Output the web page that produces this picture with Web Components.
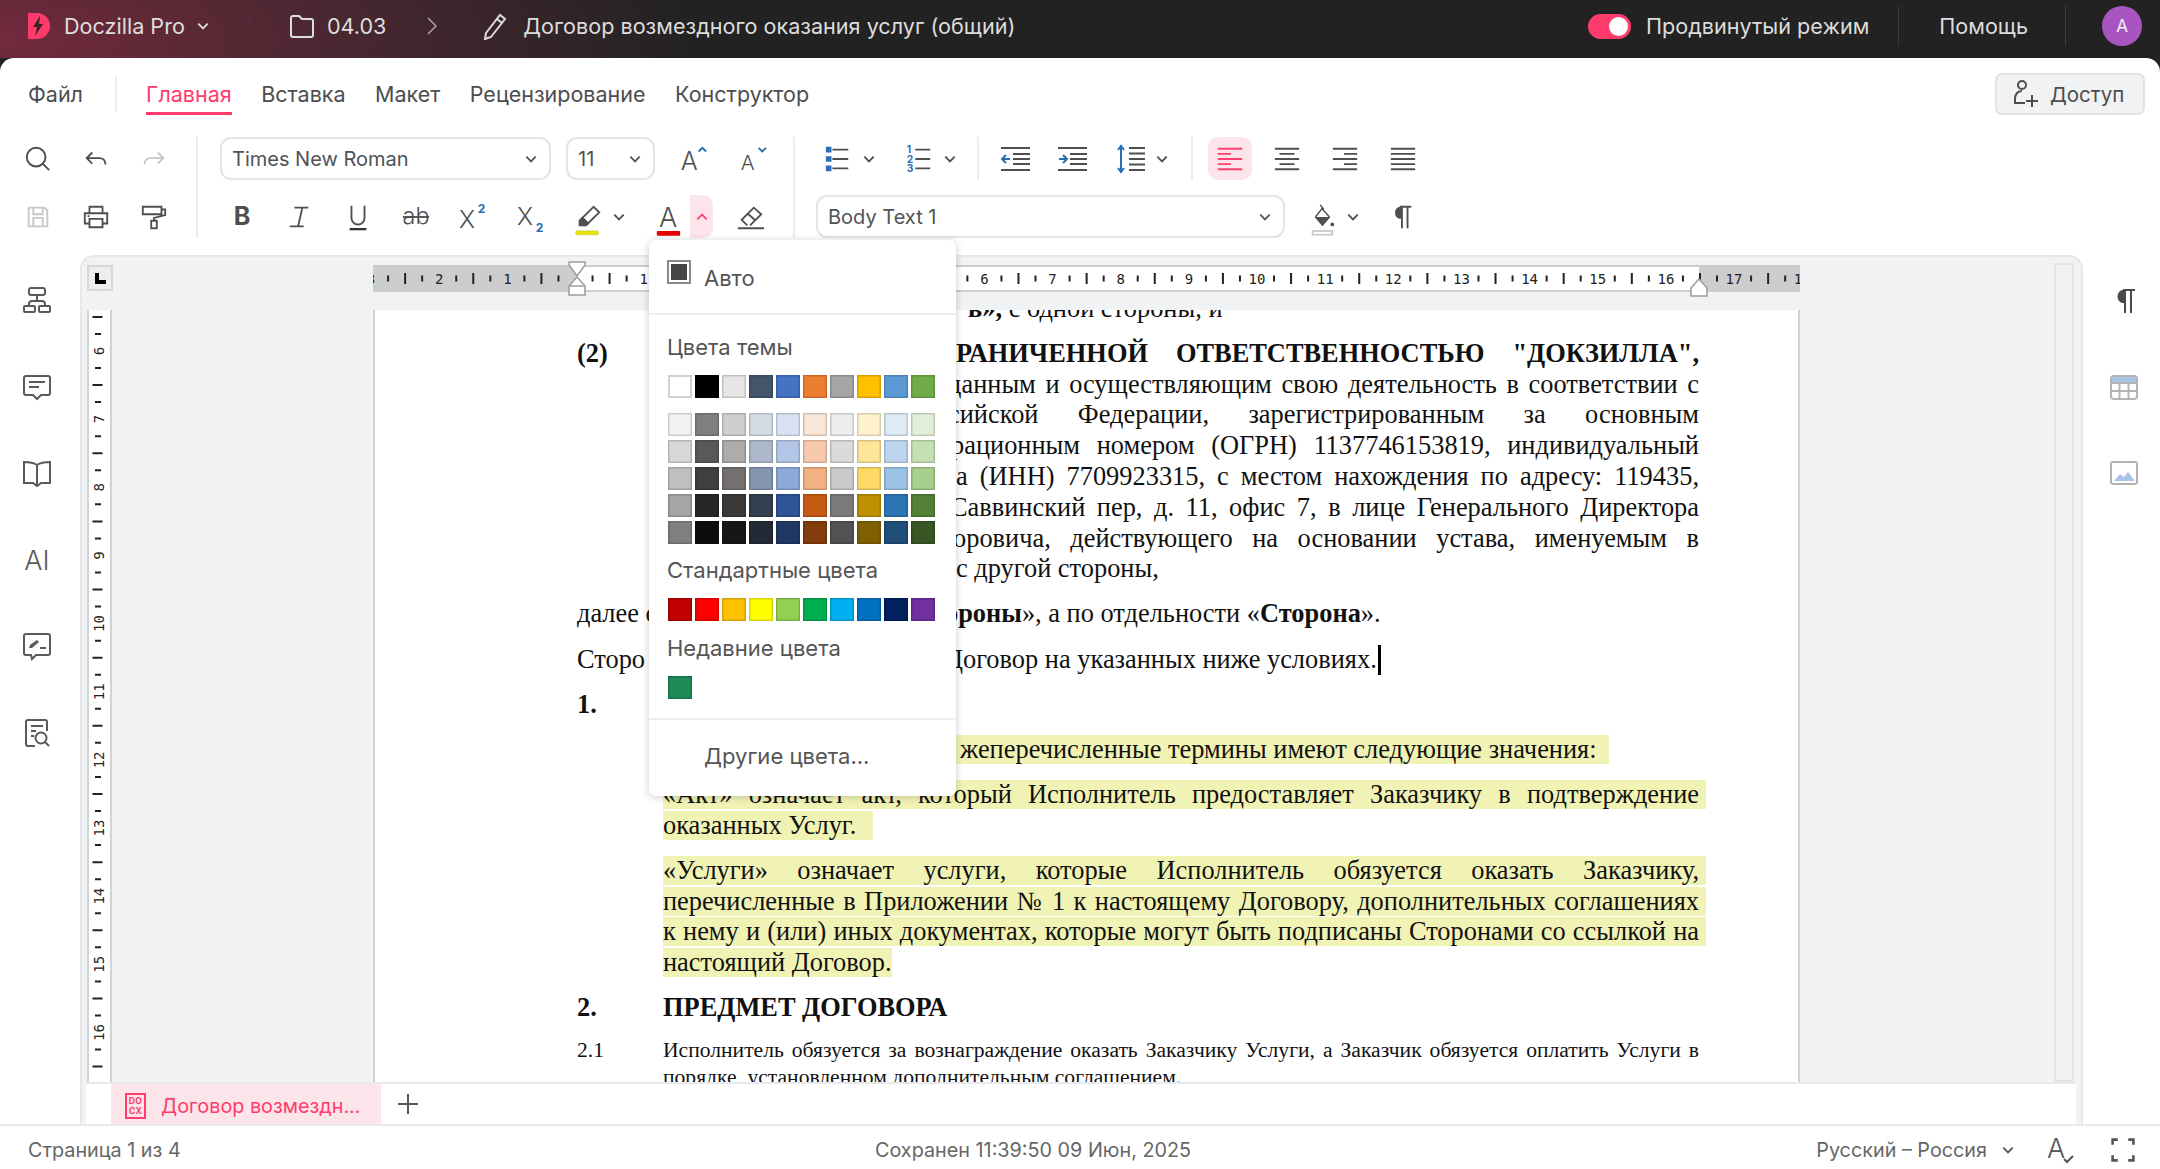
<!DOCTYPE html>
<html lang="ru">
<head>
<meta charset="utf-8">
<title>Doczilla Pro</title>
<style>
  html, body { margin: 0; height: 100%; overflow: hidden; }
  body {
    width: 2160px; height: 1169px;
    display: flex; flex-direction: column;
    background: #222;
    font-family: Inter, "Noto Sans", sans-serif;
    color: #4d4d4d;
  }
</style>
</head>
<body>
<app-topbar></app-topbar>
<main-panel>
  <ribbon-tabs></ribbon-tabs>
  <ribbon-tools></ribbon-tools>
  <work-space>
    <doc-line end style="--from:305px;margin-top:-17px"><b>в»,</b> с одной стороны, и</doc-line>

    <doc-line lead="(2)" style="--from:293px;margin-top:14px"><b>РАНИЧЕННОЙ ОТВЕТСТВЕННОСТЬЮ "ДОКЗИЛЛА",</b></doc-line>
    <doc-line style="--from:285px">данным и осуществляющим свою деятельность в соответствии с</doc-line>
    <doc-line style="--from:285px">сийской Федерации, зарегистрированным за основным</doc-line>
    <doc-line style="--from:288px">рационным номером (ОГРН) 1137746153819, индивидуальный</doc-line>
    <doc-line style="--from:293px">а (ИНН) 7709923315, с местом нахождения по адресу: 119435,</doc-line>
    <doc-line style="--from:287px">Саввинский пер, д. 11, офис 7, в лице Генерального Директора</doc-line>
    <doc-line style="--from:290px">оровича, действующего на основании устава, именуемым в</doc-line>
    <doc-line end style="--from:293px">с другой стороны,</doc-line>

    <doc-line end plain="далее с" class="gap" style="--from:282px"><b>ороны</b>», а по отдельности «<b>Сторона</b>».</doc-line>
    <doc-line end plain="Сторо" class="gap" caret style="--from:282px">Договор на указанных ниже условиях.</doc-line>
    <doc-line end lead="1." class="gap"></doc-line>

    <doc-line end mark class="gap" style="--from:297px;--mark-end:1609px">жеперечисленные термины имеют следующие значения:</doc-line>
    <doc-line mark class="gap">«Акт» означает акт, который Исполнитель предоставляет Заказчику в подтверждение</doc-line>
    <doc-line end mark style="--mark-end:873px">оказанных Услуг.</doc-line>
    <doc-line mark class="gap">«Услуги» означает услуги, которые Исполнитель обязуется оказать Заказчику,</doc-line>
    <doc-line mark>перечисленные в Приложении № 1 к настоящему Договору, дополнительных соглашениях</doc-line>
    <doc-line mark>к нему и (или) иных документах, которые могут быть подписаны Сторонами со ссылкой на</doc-line>
    <doc-line end mark style="--mark-end:892px">настоящий Договор.</doc-line>

    <doc-line end lead="2." class="gap"><b class="h">ПРЕДМЕТ ДОГОВОРА</b></doc-line>
    <doc-line small plain="2.1" class="gap">Исполнитель обязуется за вознаграждение оказать Заказчику Услуги, а Заказчик обязуется оплатить Услуги в</doc-line>
    <doc-line small end>порядке, установленном дополнительным соглашением.</doc-line>
  </work-space>
  <status-bar></status-bar>
  <color-menu></color-menu>
</main-panel>

<script>
const BLUE = "#2a6db5";
const THEXT = 'font-family="Inter,sans-serif" fill="currentColor" stroke="none"';
const ICONS = {
  search: `<circle cx="13" cy="13" r="10"/><path d="M20.5 20.5 27 27"/>`,
  undo: `<path d="M11 8 5 14l6 6M5 14h14a6 6 0 0 1 6 6v1"/>`,
  redo: `<path d="m19 8 6 6-6 6M25 14H11a6 6 0 0 0-6 6v1"/>`,
  save: `<path d="M5 5h17l3 3v17H5zM10 5v7h10V5M10 25v-9h10v9"/>`,
  print: `<path d="M8 11V4h14v7M8 22H3V11h24v11h-5M8 17h14v9H8zM6 14h2"/>`,
  paint: `<path d="M3 4h20v8H3zM23 7h4v6l-12 3v3M12 19h6v8h-6z"/>`,
  bold: `<text x="15" y="24" text-anchor="middle" font-size="27" font-weight="700" ${THEXT}>B</text>`,
  italic: `<path d="M9 5h15M17.5 5 13 25M4 25h15"/>`,
  under: `<path d="M8 3v13a7 7 0 0 0 14 0V3"/><path d="M6 28h18" stroke-width="2.5" stroke="#333"/>`,
  strike: `<text x="15" y="23" text-anchor="middle" font-size="25" font-weight="300" ${THEXT}>ab</text><path d="M1 15h28"/>`,
  sup: `<text x="1" y="27" font-size="26" font-weight="300" ${THEXT}>X<tspan dx="3" dy="-16" font-size="13" font-weight="700" fill="${BLUE}">2</tspan></text>`,
  sub: `<text x="0" y="24" font-size="26" font-weight="300" ${THEXT}>X<tspan dx="3" dy="7" font-size="13" font-weight="700" fill="${BLUE}">2</tspan></text>`,
  growa: `<text x="2" y="27" font-size="27" font-weight="300" ${THEXT}>A</text><path d="m21 7 4-4 4 4" stroke="${BLUE}"/>`,
  shrinka: `<text x="3" y="27" font-size="22" font-weight="300" ${THEXT}>A</text><path d="m22 3 4 4 4-4" stroke="${BLUE}"/>`,
  marker: `<path d="m9 16 12-12 6 6-12 12z"/><path d="m9 16 6 6-2 2H6v-5z" fill="currentColor"/><rect x="2" y="30" width="24" height="4" rx="1" fill="#e6e600" stroke="#d8d13a" stroke-width="1"/>`,
  fontc: `<text x="15" y="26" text-anchor="middle" font-size="29" font-weight="300" ${THEXT}>A</text><rect x="3" y="30" width="25" height="5" rx="1" fill="#e60000" stroke="none"/>`,
  eraser: `<path d="m11 24-6-6L18 5l8 7-12 12M11 11l8 7M1 27h28"/>`,
  bullets: `<path d="M9 5h17M9 15h17M9 25h17"/><path d="M2 2h6v6H2zM2 12h6v6H2zM2 22h6v6H2z" fill="${BLUE}" stroke="none"/>`,
  numbers: `<path d="M11 5h16M11 15h16M11 25h16"/><g font-family="Inter,sans-serif" font-size="11" font-weight="700" fill="${BLUE}" stroke="none"><text x="2" y="9">1</text><text x="2" y="19">2</text><text x="2" y="29">3</text></g>`,
  outdent: `<path d="M1 4h29M13 10h17M13 15h17M13 20h17M1 26h29"/><path d="M10 15H2M6 11l-4 4 4 4" stroke="${BLUE}"/>`,
  indent: `<path d="M1 4h29M13 10h17M13 15h17M13 20h17M1 26h29"/><path d="M2 15h8M6 11l4 4-4 4" stroke="${BLUE}"/>`,
  spacing: `<path d="M13 4h16M13 9.500h16M13 15h16M13 20.500h16M13 26h16"/><path d="M5 3v24M2 6l3-4 3 4M2 24l3 4 3-4" stroke="${BLUE}"/>`,
  left: `<path d="M2 4h26M2 9.500h14M2 15h26M2 20.500h14M2 26h26"/>`,
  center: `<path d="M2 4h26M7 9.500h16M2 15h26M7 20.500h16M2 26h26"/>`,
  right: `<path d="M2 4h26M14 9.500h14M2 15h26M14 20.500h14M2 26h26"/>`,
  justify: `<path d="M2 4h26M2 9.500h26M2 15h26M2 20.500h26M2 26h26"/>`,
  fill: `<path d="m8 15 7-9 8 9M13 2l4 5" stroke-width="1.500"/><path d="M7 15h17l-8.500 10z" fill="currentColor" stroke="none"/><circle cx="26" cy="23" r="2" fill="currentColor" stroke="none"/><rect x="5" y="30" width="21" height="4" fill="#fff" stroke="#ccc"/>`,
  pilcrow: `<path d="M14 4h12M16 4v23M22 4v23"/><path d="M15 4h-2a7 7 0 0 0 0 13h2z" fill="currentColor" stroke="none"/>`,
  chevron: `<path d="M10 12.500 15 17.500 20 12.500"/>`,
  chevup: `<path d="M10 17.500 15 12.500 20 17.500"/>`,
  tree: `<path d="M9 3h12a2 2 0 0 1 2 2v3a2 2 0 0 1-2 2H9a2 2 0 0 1-2-2V5a2 2 0 0 1 2-2zM15 10v6M7 21v-2a3 3 0 0 1 3-3h10a3 3 0 0 1 3 3v2M3 21h9a1 1 0 0 1 1 1v4a1 1 0 0 1-1 1H3a1 1 0 0 1-1-1v-4a1 1 0 0 1 1-1zM18 21h9a1 1 0 0 1 1 1v4a1 1 0 0 1-1 1h-9a1 1 0 0 1-1-1v-4a1 1 0 0 1 1-1z"/>`,
  comment: `<path d="M4 4h22a2 2 0 0 1 2 2v15a2 2 0 0 1-2 2H19l-4 4-4-4H4a2 2 0 0 1-2-2V6a2 2 0 0 1 2-2zM7 10h16M7 15h10"/>`,
  book: `<path d="M15 7C12 5 8 4 2 4v21h9l4 3 4-3h9V4c-6 0-10 1-13 3v21"/>`,
  ai: `<text x="15" y="25" text-anchor="middle" font-size="27" font-weight="300" ${THEXT}>AI</text>`,
  feedback: `<path d="M4 3h22a2 2 0 0 1 2 2v17a2 2 0 0 1-2 2H14l-4 4-1-4H4a2 2 0 0 1-2-2V5a2 2 0 0 1 2-2zM18 17h6"/><path d="m7 17 1-3 7-5 2 2-7 6z" fill="currentColor" stroke="none"/>`,
  finddoc: `<path d="M13 28H6a2 2 0 0 1-2-2V4a2 2 0 0 1 2-2h17a2 2 0 0 1 2 2v9M9 8h12M9 13h5M9 18h3"/><circle cx="19" cy="20" r="5.500"/><path d="m23 24 4 4"/>`,
  table: `<rect x="2" y="4" width="26" height="23" rx="3"/><path d="M3 5h24v5H3z" fill="#a9c4e8" stroke="none"/><path d="M2 11h26M2 19h26M10.500 11v16M19.500 11v16"/>`,
  image: `<rect x="2" y="4" width="26" height="22" rx="2"/><path d="m5 23 6-7 4 3 4-5 7 9z" fill="#a9c4e8" stroke="none"/>`,
  spell: `<text x="1" y="23" font-size="27" font-weight="300" ${THEXT}>A</text><path d="m18 24 3 3 6-6"/>`,
  full: `<path d="M3 9V3h6M21 3h6v6M27 21v6h-6M9 27H3v-6" stroke-width="3"/>`,
};
const svgIcon = (name, size = 30) =>
  `<svg viewBox="0 0 30 30" width="${size}" height="${size}" fill="none" stroke="currentColor" stroke-width="2" overflow="visible">${ICONS[name]}</svg>`;

class ToolIcon extends HTMLElement {
  connectedCallback() {
    const size = this.getAttribute("size") || 30;
    this.attachShadow({ mode: "open" }).innerHTML = `
      <style>:host{display:inline-flex;align-items:center;justify-content:center;flex:none;line-height:0}</style>
      ${svgIcon(this.getAttribute("name"), size)}`;
  }
}
customElements.define("tool-icon", ToolIcon);

class ToolBtn extends HTMLElement {
  connectedCallback() {
    const name = this.getAttribute("icon");
    const size = this.getAttribute("size") || 28;
    this.attachShadow({ mode: "open" }).innerHTML = `
      <style>
        :host{display:flex;align-items:center;justify-content:center;flex:none;width:44px;height:43px;color:#4f4f4f;border-radius:10px}
        :host([soft]){color:#c8c8c8}
        :host([narrow]){width:18px}
        :host([active]){background:#fbe4ea;color:#ff4070}
        :host([split]){width:23px;background:#fbe4ea;color:#ff4070;border-radius:0 10px 10px 0}
      </style>
      <tool-icon name="${name}" size="${size}"></tool-icon>`;
  }
}
customElements.define("tool-btn", ToolBtn);

class SelectBox extends HTMLElement {
  connectedCallback() {
    this.attachShadow({ mode: "open" }).innerHTML = `
      <style>
        :host{display:flex;align-items:center;justify-content:space-between;flex:none;box-sizing:border-box;height:43px;
          border:2px solid #e4e4e4;border-radius:11px;padding:0 4px 0 10px;background:#fff;color:#4f5358;font-size:20px}
        tool-icon{color:#555}
      </style>
      <slot></slot><tool-icon name="chevron" size="28"></tool-icon>`;
  }
}
customElements.define("select-box", SelectBox);

class AppTopbar extends HTMLElement {
  connectedCallback() {
    this.attachShadow({ mode: "open" }).innerHTML = `
      <style>
        :host{display:flex;flex:none;height:58px;box-sizing:border-box;padding:0 18px 6px 28px;align-items:center;color:#ddd;font-size:21.600px;
          background:radial-gradient(ellipse 700px 240px at 0 40px,#732a3e 0,#4c2731 45%,#222 100%)}
        svg{flex:none}
        .chev{width:20px;margin-left:8px}
        .sep{width:1px;height:40px;background:#3a3a3a;flex:none}
        .name{margin-left:14px}
        .folder{margin:0 12px 0 39px}
        .crumb{margin:0 46px 0 40px;color:#aaa}
        .title{margin-left:16px}
        .grow{flex:1}
        .toggle{width:43px;height:25px;border-radius:13px;background:#ff3b6b;position:relative;flex:none}
        .toggle::after{content:"";position:absolute;right:3px;top:3px;width:19px;height:19px;border-radius:50%;background:#fff}
        .mode{margin:0 29px 0 15px}
        .help{margin:0 37px 0 40px}
        .avatar{margin-left:36px;width:40px;height:40px;border-radius:50%;background:#a855c2;color:#eee;display:flex;align-items:center;justify-content:center;font-size:17px;flex:none}
      </style>
      <svg width="22" height="26" viewBox="0 0 22 26"><path d="M0 0h9a13 13 0 0 1 0 26H0z" fill="#ff3b6b"/><path d="M12 3 5 14h4l-2 9 8-12h-4z" fill="#3c2028"/></svg>
      <span class="name">Doczilla Pro</span>
      <tool-icon class="chev" name="chevron" size="28"></tool-icon>
      <span class="sep" style="margin-left:36px"></span>
      <svg class="folder" width="26" height="26" viewBox="0 0 26 26" fill="none" stroke="#ddd" stroke-width="2"><path d="M2 22V5a2 2 0 0 1 2-2h6l3 3h9a2 2 0 0 1 2 2v14a2 2 0 0 1-2 2H4a2 2 0 0 1-2-2z"/></svg>
      <span>04.03</span>
      <svg class="crumb" width="11" height="20" viewBox="0 0 11 20" fill="none" stroke="#aaa" stroke-width="1.500"><path d="m2 2 8 8-8 8"/></svg>
      <svg width="24" height="28" viewBox="0 0 24 28" fill="none" stroke="#ddd" stroke-width="2"><path d="M3 21 17 3l5 4L8 25l-6 2zM14 7l5 4"/></svg>
      <span class="title">Договор возмездного оказания услуг (общий)</span>
      <span class="grow"></span>
      <span class="toggle"></span>
      <span class="mode">Продвинутый режим</span>
      <span class="sep"></span>
      <span class="help">Помощь</span>
      <span class="sep"></span>
      <span class="avatar">A</span>`;
  }
}
customElements.define("app-topbar", AppTopbar);

class MainPanel extends HTMLElement {
  connectedCallback() {
    this.attachShadow({ mode: "open" }).innerHTML = `
      <style>:host{display:flex;flex-direction:column;flex:1;min-height:0;position:relative;background:#fff;border-radius:14px 14px 0 0}</style>
      <slot></slot>`;
  }
}
customElements.define("main-panel", MainPanel);

class RibbonTabs extends HTMLElement {
  connectedCallback() {
    this.attachShadow({ mode: "open" }).innerHTML = `
      <style>
        :host{display:flex;flex:none;height:42px;margin-top:15px;padding:0 15px 0 28px;font-size:21.500px;color:#4d4d4d;align-items:stretch}
        span{display:flex;align-items:center;margin-right:29.500px;box-sizing:border-box;padding-top:0}
        .sep{width:2px;height:36px;margin:3px 29px 0 32px;background:#ececec}
        .on{color:#ff3b6b;border-bottom:3px solid #ff3b6b;padding-top:3px}
        .grow{flex:1;margin:0}
        button{font:inherit;font-size:20.500px;color:#4d4d4d;display:flex;align-items:center;gap:11px;width:150px;padding:0 0 0 14px;box-sizing:border-box;background:#f1f2f4;border:2px solid #e2e3e5;border-radius:7px}
      </style>
      <span style="margin:0">Файл</span><span class="sep"></span>
      <span class="on">Главная</span><span>Вставка</span><span>Макет</span><span>Рецензирование</span><span>Конструктор</span>
      <span class="grow"></span>
      <button><svg width="28" height="30" viewBox="0 0 28 30" fill="none" stroke="#4d4d4d" stroke-width="2"><circle cx="11" cy="6" r="4"/><path d="M11 12c-5 0-7 4-7 9v3h10M21 16v12M15 22h12"/></svg>Доступ</button>`;
  }
}
customElements.define("ribbon-tabs", RibbonTabs);

class RibbonTools extends HTMLElement {
  connectedCallback() {
    this.attachShadow({ mode: "open" }).innerHTML = `
      <style>
        :host{display:flex;flex:none;height:101px;margin-top:22px;padding-left:16px}
        .col{display:flex;flex-direction:column;justify-content:space-between;flex:none}
        .row{display:flex;align-items:center;height:43px;gap:14px}
        .row.tight{gap:0}
        .vsep{width:2px;height:101px;background:#ececec;flex:none}
        .hsep{width:2px;height:43px;background:#ececec;flex:none}
      </style>
      <div class="col" style="margin-right:20px">
        <div class="row"><tool-btn icon="search"></tool-btn><tool-btn icon="undo"></tool-btn><tool-btn icon="redo" soft></tool-btn></div>
        <div class="row"><tool-btn icon="save" soft></tool-btn><tool-btn icon="print"></tool-btn><tool-btn icon="paint"></tool-btn></div>
      </div>
      <span class="vsep"></span>
      <div class="col" style="margin:0 20px 0 22px;width:553px">
        <div class="row tight">
          <select-box style="width:331px">Times New Roman</select-box>
          <select-box style="width:89px;margin-left:15px">11</select-box>
          <tool-btn icon="growa" style="margin-left:16px"></tool-btn>
          <tool-btn icon="shrinka" style="margin-left:15px"></tool-btn>
        </div>
        <div class="row tight" style="margin-left:0">
          <tool-btn icon="bold"></tool-btn>
          <tool-btn icon="italic" style="margin-left:14px"></tool-btn>
          <tool-btn icon="under" style="margin-left:14px"></tool-btn>
          <tool-btn icon="strike" style="margin-left:14px"></tool-btn>
          <tool-btn icon="sup" style="margin-left:12px"></tool-btn>
          <tool-btn icon="sub" style="margin-left:15px"></tool-btn>
          <tool-btn icon="marker" style="margin-left:13px"></tool-btn>
          <tool-btn icon="chevron" narrow></tool-btn>
          <tool-btn icon="fontc" style="margin-left:18px"></tool-btn>
          <tool-btn icon="chevup" split></tool-btn>
          <tool-btn icon="eraser" style="margin-left:16px"></tool-btn>
        </div>
      </div>
      <span class="vsep"></span>
      <div class="col" style="margin-left:21px">
        <div class="row tight">
          <tool-btn icon="bullets"></tool-btn><tool-btn icon="chevron" narrow></tool-btn>
          <tool-btn icon="numbers" style="margin-left:19px"></tool-btn><tool-btn icon="chevron" narrow></tool-btn>
          <span class="hsep" style="margin-left:18px"></span>
          <tool-btn icon="outdent" size="30" style="margin-left:14px"></tool-btn>
          <tool-btn icon="indent" size="30" style="margin-left:13px"></tool-btn>
          <tool-btn icon="spacing" size="30" style="margin-left:15px"></tool-btn><tool-btn icon="chevron" narrow></tool-btn>
          <span class="hsep" style="margin-left:20px"></span>
          <tool-btn icon="left" active style="margin-left:15px"></tool-btn>
          <tool-btn icon="center" style="margin-left:13px"></tool-btn>
          <tool-btn icon="right" style="margin-left:14px"></tool-btn>
          <tool-btn icon="justify" style="margin-left:14px"></tool-btn>
        </div>
        <div class="row tight">
          <select-box style="width:469px">Body Text 1</select-box>
          <tool-btn icon="fill" style="margin-left:15px"></tool-btn><tool-btn icon="chevron" narrow></tool-btn>
          <tool-btn icon="pilcrow" style="margin-left:17px"></tool-btn>
        </div>
      </div>`;
  }
}
customElements.define("ribbon-tools", RibbonTools);

class RulerBar extends HTMLElement {
  connectedCallback() {
    const vertical = this.hasAttribute("vertical");
    const cm = 68.15;
    let out = "";
    if (vertical) {
      // начало страницы: цифра 6 стоит на y=351, верх линейки y=310
      const at = n => 41 + (n - 6) * cm;
      for (let n = 5; n <= 17; n++) {
        const y = at(n);
        if (n >= 6 && n <= 16) out += `<text transform="translate(16.500 ${y}) rotate(-90)" text-anchor="middle" font-size="14" font-family="'DejaVu Sans Mono',monospace" fill="#222">${n}</text>`;
        out += `<path d="M8 ${y + cm * .25}h6M5.500 ${y + cm * .5}h10M8 ${y + cm * .75}h6" stroke="#222" stroke-width="2"/>`;
      }
      this.attachShadow({ mode: "open" }).innerHTML = `
        <style>:host{display:block;width:25px;height:772px;box-sizing:border-box;overflow:hidden;background:#fff;border:solid #d2d3d5;border-width:0 2px}svg{display:block;margin-left:-2px}</style>
        <svg width="25" height="772">${out}</svg>`;
    } else {
      const at = n => 202.5 + n * cm;
      for (let n = -3; n <= 18; n++) {
        const x = at(n);
        if (n !== 0) out += `<text x="${x}" y="19" text-anchor="middle" font-size="14" font-family="'DejaVu Sans Mono',monospace" fill="#222">${Math.abs(n)}</text>`;
        out += `<path d="M${x + cm * .25} 10.500v6M${x + cm * .5} 8v11M${x + cm * .75} 10.500v6" stroke="#222" stroke-width="2"/>`;
      }
      this.attachShadow({ mode: "open" }).innerHTML = `
        <style>:host{display:block;width:1427px;height:27px;position:relative}svg{display:block;overflow:visible}</style>
        <svg width="1427" height="27">
          <defs><clipPath id="c"><rect width="1427" height="27"/></clipPath></defs>
          <rect width="1427" height="27" fill="#cdcdcd"/>
          <rect x="204" y="2" width="1122" height="23" fill="#fff"/>
          <g clip-path="url(#c)">${out}</g>
          <path d="M196 -3h16v3l-8 11-8-11zM204 12l8 9v9h-16v-9z" fill="#fff" stroke="#9c9c9c" stroke-width="1.500"/>
          <path d="M196 21h16" stroke="#9c9c9c" stroke-width="1.500"/>
          <path d="M1326 14l8 9v8h-16v-8z" fill="#fff" stroke="#9c9c9c" stroke-width="1.500"/>
        </svg>`;
    }
  }
}
customElements.define("ruler-bar", RulerBar);

class WorkSpace extends HTMLElement {
  connectedCallback() {
    this.attachShadow({ mode: "open" }).innerHTML = `
      <style>
        :host{display:flex;flex:1;min-height:0;margin-top:17px}
        .rail{flex:none;display:flex;flex-direction:column;align-items:center;color:#5a5a5a}
        .rail.l{width:80px;box-sizing:border-box;padding:30px 6px 0 0;gap:56.500px}
        .rail.r{width:77px;box-sizing:border-box;padding:31px 0 0 5px;gap:56px;color:#b3b3b3}
        .area{flex:1;min-width:0;box-sizing:border-box;display:flex;flex-direction:column;background:#f1f2f4;border:2px solid #e7e8ea;border-bottom:0;border-radius:14px 14px 0 0;padding:8px 5px 0 5px}
        .sheet{flex:1;min-height:0;display:grid;grid-template-columns:25px 261px 1427px 1fr;grid-template-rows:27px 18px 1fr}
        .corner{grid-column:1;grid-row:1;box-sizing:border-box;width:26px;height:26px;background:#eee;border:2px solid #d6d7d9;display:flex;align-items:center;justify-content:center}
        .corner i{display:block;width:11px;height:11px;border:solid #000;border-width:0 0 4px 4px;box-sizing:border-box}
        ruler-bar[h]{grid-column:3;grid-row:1}
        ruler-bar[vertical]{grid-column:1;grid-row:3}
        .page{grid-column:3;grid-row:3;min-height:0;overflow:hidden;background:#fff;box-sizing:border-box;border:solid #d2d3d5;border-width:0 2px;font:26.400px/30.800px "Liberation Serif","Times New Roman",serif;color:#111;padding:0 99px 0 202px}
        .scroll{grid-column:4;grid-row:1/4;justify-self:end;width:20px;box-sizing:border-box;margin:-2px 2px 0 0;height:819px;border:2px solid #e3e4e6}
        .tabs{flex:none;height:42px;box-sizing:border-box;background:#fff;border-top:2px solid #e8e9eb;margin:0 0 0 -1px;display:flex;font-size:19.800px;padding-left:25px}
        .tab{width:270px;box-sizing:border-box;padding:3px 0 0 14px;background:#fbe4ea;color:#ff3b6b;display:flex;align-items:center;gap:15px;white-space:nowrap}
        .docx{width:21px;height:26px;box-sizing:border-box;border:2px solid #ff3b6b;font:700 8.500px/10px "Inter",sans-serif;text-align:center;letter-spacing:.3px;display:flex;flex-direction:column;justify-content:center;flex:none}
        .plus{margin-left:15px;align-self:center;color:#555}
      </style>
      <div class="rail l">
        <tool-icon name="tree"></tool-icon><tool-icon name="comment"></tool-icon><tool-icon name="book"></tool-icon>
        <tool-icon name="ai"></tool-icon><tool-icon name="feedback"></tool-icon><tool-icon name="finddoc"></tool-icon>
      </div>
      <div class="area">
        <div class="sheet">
          <div class="corner"><i></i></div>
          <ruler-bar h></ruler-bar>
          <ruler-bar vertical></ruler-bar>
          <div class="page"><slot></slot></div>
          <div class="scroll"></div>
        </div>
        <div class="tabs">
          <div class="tab"><span class="docx"><span>DO</span><span>CX</span></span>Договор возмездн...</div>
          <svg class="plus" width="24" height="24" viewBox="0 0 24 24" fill="none" stroke="#555" stroke-width="2"><path d="M12 2v20M2 12h20"/></svg>
        </div>
      </div>
      <div class="rail r">
        <tool-icon name="pilcrow" style="color:#4a4a4a"></tool-icon><tool-icon name="table"></tool-icon><tool-icon name="image"></tool-icon>
      </div>`;
  }
}
customElements.define("work-space", WorkSpace);

class DocLine extends HTMLElement {
  connectedCallback() {
    const lead = this.getAttribute("lead");
    const plain = this.getAttribute("plain");
    const caret = this.hasAttribute("caret") ? `<i class="caret"></i>` : "";
    this.attachShadow({ mode: "open" }).innerHTML = `
      <style>
        :host{display:flex;height:30.800px;white-space:nowrap;position:relative}
        :host(.gap){margin-top:14.300px}
        :host([small]){font-size:21.600px;height:26.500px;line-height:26.500px}
        .lead{flex:none;width:86px;font-weight:700}
        .lead.plain{font-weight:400}
        .body{flex:1;min-width:0;box-sizing:border-box;padding-left:var(--from,0px);text-align:justify;text-align-last:justify;white-space:normal}
        :host([end]) .body{text-align-last:left;white-space:nowrap}
        :host([mark]) .body{background:linear-gradient(#f1f3b5,#f1f3b5) no-repeat 0 1px/100% 29px;margin-right:-7px;padding-right:7px}
        :host([mark][style*="--mark-end"]) .body{flex:none;margin:0;padding-right:0;width:calc(var(--mark-end) - 663px)}
        .caret{display:inline-block;width:3px;height:30px;margin-left:1px;background:#000;vertical-align:-7px}
      </style>
      <span class="lead ${plain ? "plain" : ""}">${lead || plain || ""}</span>
      <div class="body"><slot></slot>${caret}</div>`;
  }
}
customElements.define("doc-line", DocLine);

class ColorMenu extends HTMLElement {
  connectedCallback() {
    const theme = ["#ffffff","#000000","#e7e6e6","#44546a","#4472c4","#ed7d31","#a5a5a5","#ffc000","#5b9bd5","#70ad47"];
    const shades = [
      ["#f2f2f2","#7f7f7f","#d0cece","#d6dce4","#d9e2f3","#fbe5d5","#ededed","#fff2cc","#deeaf6","#e2efd9"],
      ["#d8d8d8","#595959","#aeabab","#adb9ca","#b4c6e7","#f7caac","#dbdbdb","#ffe599","#bdd6ee","#c5e0b3"],
      ["#bfbfbf","#3f3f3f","#757070","#8496b0","#8eaadb","#f4b183","#c9c9c9","#ffd965","#9cc3e5","#a8d08d"],
      ["#a5a5a5","#262626","#3a3838","#323f4f","#2f5496","#c55a11","#7b7b7b","#bf9000","#2e75b5","#538135"],
      ["#7f7f7f","#0c0c0c","#171616","#222a35","#1f3864","#833c0b","#525252","#7f6000","#1e4e79","#385623"],
    ];
    const std = ["#c00000","#ff0000","#ffc000","#ffff00","#92d050","#00b050","#00b0f0","#0070c0","#002060","#7030a0"];
    const cells = list => list.map(c => `<span class="sw" style="background:${c}"></span>`).join("");
    this.attachShadow({ mode: "open" }).innerHTML = `
      <style>
        :host{position:absolute;left:649px;top:182px;width:307px;height:556px;box-sizing:border-box;background:#fff;border-radius:7px;box-shadow:0 1px 8px rgba(0,0,0,.2);font-size:22px;color:#555;display:flex;flex-direction:column}
        .auto{height:75px;flex:none;box-sizing:border-box;border-bottom:2px solid #eee;display:flex;align-items:center;padding:3px 0 0 18px}
        .auto i{width:24px;height:24px;box-sizing:border-box;border:2px solid #8a8a8a;background:#444;box-shadow:inset 0 0 0 2px #fff;margin:-12px 13px 0 0}
        .mid{flex:1;padding:0 19px;box-sizing:border-box}
        h4{margin:0 0 0 -1px;font:inherit;line-height:24px}
        .grid{display:grid;grid-template-columns:repeat(10,24px);column-gap:3px;row-gap:4px}
        .sw{height:23px;box-sizing:border-box;box-shadow:inset 0 0 0 1.500px rgba(0,0,0,.16)}
        .sw[style*="#ffffff"]{box-shadow:inset 0 0 0 2px #d0d0d0}
        .more{height:78px;flex:none;box-sizing:border-box;border-top:2px solid #eee;display:flex;align-items:center;padding:0 0 5px 55px}
      </style>
      <div class="auto"><i></i>Авто</div>
      <div class="mid">
        <h4 style="margin-top:20px">Цвета темы</h4>
        <div class="grid" style="margin-top:16px">${cells(theme)}</div>
        <div class="grid" style="margin-top:15px">${shades.map(cells).join("")}</div>
        <h4 style="margin-top:14px">Стандартные цвета</h4>
        <div class="grid" style="margin-top:16px">${cells(std)}</div>
        <h4 style="margin-top:15px">Недавние цвета</h4>
        <div class="grid" style="margin-top:16px">${cells(["#1e8a55"])}</div>
      </div>
      <div class="more">Другие цвета...</div>`;
  }
}
customElements.define("color-menu", ColorMenu);

class StatusBar extends HTMLElement {
  connectedCallback() {
    this.attachShadow({ mode: "open" }).innerHTML = `
      <style>
        :host{display:flex;flex:none;height:45px;box-sizing:border-box;border-top:2px solid #e8e9eb;align-items:center;padding:4px 24px 0 28px;font-size:19.800px;color:#666}
        .a{width:847px}
        .b{flex:1}
        tool-icon{color:#555}
      </style>
      <span class="a">Страница 1 из 4</span>
      <span class="b">Сохранен 11:39:50 09 Июн, 2025</span>
      <span>Русский – Россия</span>
      <tool-icon name="chevron" size="28" style="margin-left:7px"></tool-icon>
      <tool-icon name="spell" style="margin-left:24px"></tool-icon>
      <tool-icon name="full" size="26" style="margin-left:34px"></tool-icon>`;
  }
}
customElements.define("status-bar", StatusBar);
</script>
</body>
</html>
